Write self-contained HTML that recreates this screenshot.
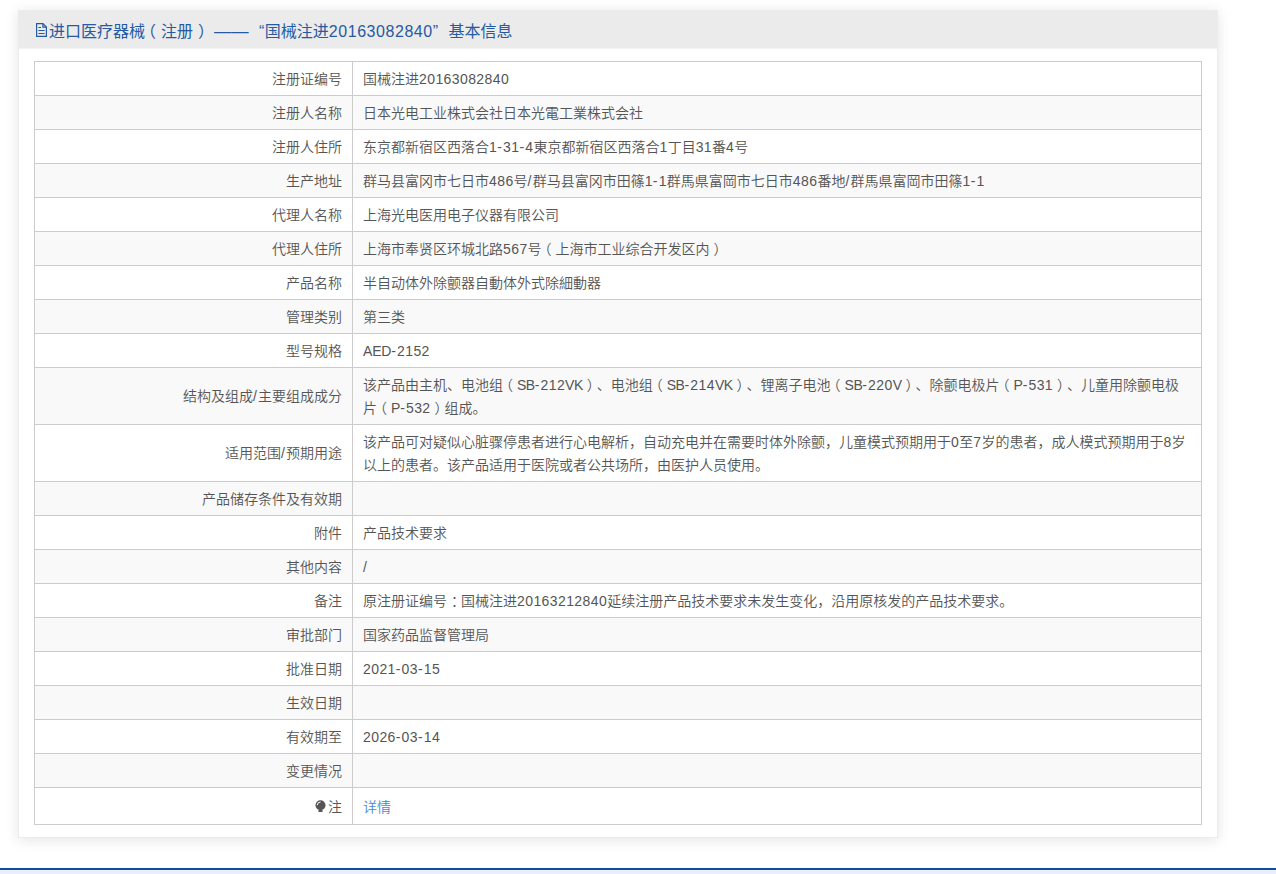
<!DOCTYPE html>
<html lang="zh-CN">
<head>
<meta charset="utf-8">
<title>进口医疗器械（注册）基本信息</title>
<style>
*{box-sizing:border-box;}
html,body{margin:0;padding:0;background:#fff;}
body{
  width:1276px;height:874px;overflow:hidden;position:relative;
  font-family:"Liberation Sans","Noto Sans CJK SC",sans-serif;
  font-size:14px;color:#555;font-weight:350;
  text-spacing-trim:space-all;font-kerning:none;
}
.card{
  position:absolute;left:18px;top:10px;width:1200px;height:828px;
  background:#fff;border:1px solid #ececec;
  box-shadow:0 2px 13px rgba(0,0,0,.11);
}
.hd{
  height:38px;background:linear-gradient(to bottom,#ebebeb 37px,#f3f3f3 37px);
  padding:0 0 0 16px;
  font-size:16px;line-height:38px;color:#265aa2;font-weight:400;
  white-space:nowrap;
}
.ht{position:relative;top:2px;}
.hd svg{display:inline-block;vertical-align:0px;margin:0 2px 0 1px;}
.n{letter-spacing:.41px;}
.h{font-style:normal;letter-spacing:1.15px;}
.u{font-style:normal;letter-spacing:-.2px;}
.u.w{letter-spacing:-.5px;}
.hd .n{letter-spacing:.55px;}
.ds{display:inline-block;transform:scaleX(1.08);transform-origin:0 50%;}
.pl,.pr{position:relative;}
.pl{left:-4px;}.pr{left:4px;}
.hd .pl{left:-5px;}.hd .pr{left:5px;}
.q1{margin-left:9px;margin-right:.5px;}
.q2{margin-right:10.5px;}
table{
  position:absolute;left:15px;top:50px;width:1168px;
  border-collapse:collapse;table-layout:fixed;
  border:1px solid #ccc;
}
td{
  border:1px solid #ccc;
  padding:6px 10px 4px;line-height:23px;height:34px;
  vertical-align:middle;font-size:14px;color:#555;font-weight:350;
  text-spacing-trim:space-all;font-kerning:none;
}
td.l{width:318px;text-align:right;white-space:nowrap;}
td.v{text-align:left;}
tr:nth-child(even) td{background:#f9f9f9;}
tr.last td{height:37px;}
tr.dbl td.l{padding:5px 10px;}
a{color:#4a8ad4;text-decoration:none;}
.bulb{display:inline-block;vertical-align:-1px;margin-right:2px;}
.foot{
  position:absolute;left:0;top:868px;width:1276px;height:6px;
  background:#e9eef8;border-top:2px solid #0b4ea2;
}
</style>
</head>
<body>
<div class="card">
  <div class="hd"><div class="ht"><svg width="11" height="14" viewBox="0 0 11 14"><path d="M.6 .6h6.3l3.5 3.5v9.3h-9.8z" fill="none" stroke="#265aa2" stroke-width="1.2"/><path d="M6.9 .6v3.5h3.5M2.4 4.5h2.6M2.4 7.5h6.2M2.4 10.5h6.2" fill="none" stroke="#265aa2" stroke-width="1.2"/></svg>进口医疗器械<span class="pl">（</span>注册<span class="pr">）</span> <span class="ds">——</span> <span class="q1">“</span>国械注进<span class="n">20163082840</span><span class="q2">”</span>基本信息</div></div>
  <table>
    <tr><td class="l">注册证编号</td><td class="v">国械注进<span class="n">20163082840</span></td></tr>
    <tr><td class="l">注册人名称</td><td class="v">日本光电工业株式会社日本光電工業株式会社</td></tr>
    <tr><td class="l">注册人住所</td><td class="v">东京都新宿区西落合<span class="n">1<i class="h">-</i>31<i class="h">-</i>4</span>東京都新宿区西落合<span class="n">1</span>丁目<span class="n">31</span>番<span class="n">4</span>号</td></tr>
    <tr><td class="l">生产地址</td><td class="v">群马县富冈市七日市<span class="n">486</span>号<span class="n"><i class="h">/</i></span>群马县富冈市田篠<span class="n">1<i class="h">-</i>1</span>群馬県富岡市七日市<span class="n">486</span>番地<span class="n"><i class="h">/</i></span>群馬県富岡市田篠<span class="n">1<i class="h">-</i>1</span></td></tr>
    <tr><td class="l">代理人名称</td><td class="v">上海光电医用电子仪器有限公司</td></tr>
    <tr><td class="l">代理人住所</td><td class="v">上海市奉贤区环城北路<span class="n">567</span>号<span class="pl">（</span>上海市工业综合开发区内<span class="pr">）</span></td></tr>
    <tr><td class="l">产品名称</td><td class="v">半自动体外除颤器自動体外式除細動器</td></tr>
    <tr><td class="l">管理类别</td><td class="v">第三类</td></tr>
    <tr><td class="l">型号规格</td><td class="v"><span class="n"><i class="u">AED</i><i class="h">-</i>2152</span></td></tr>
    <tr class="dbl"><td class="l">结构及组成<i class="h">/</i>主要组成成分</td><td class="v">该产品由主机、电池组<span class="pl">（</span><span class="n"><i class="u w">SB</i><i class="h">-</i>212<i class="u w">VK</i></span><span class="pr">）</span>、电池组<span class="pl">（</span><span class="n"><i class="u w">SB</i><i class="h">-</i>214<i class="u w">VK</i></span><span class="pr">）</span>、锂离子电池<span class="pl">（</span><span class="n"><i class="u w">SB</i><i class="h">-</i>220<i class="u w">V</i></span><span class="pr">）</span>、除颤电极片<span class="pl">（</span><span class="n"><i class="u">P</i><i class="h">-</i>531</span><span class="pr">）</span>、儿童用除颤电极<br>片<span class="pl">（</span><span class="n"><i class="u">P</i><i class="h">-</i>532</span><span class="pr">）</span>组成。</td></tr>
    <tr class="dbl"><td class="l">适用范围<i class="h">/</i>预期用途</td><td class="v">该产品可对疑似心脏骤停患者进行心电解析，自动充电并在需要时体外除颤，儿童模式预期用于<span class="n">0</span>至<span class="n">7</span>岁的患者，成人模式预期用于<span class="n">8</span>岁<br>以上的患者。该产品适用于医院或者公共场所，由医护人员使用。</td></tr>
    <tr><td class="l">产品储存条件及有效期</td><td class="v"></td></tr>
    <tr><td class="l">附件</td><td class="v">产品技术要求</td></tr>
    <tr><td class="l">其他内容</td><td class="v"><span class="n"><i class="h">/</i></span></td></tr>
    <tr><td class="l">备注</td><td class="v">原注册证编号<span class="pr">：</span>国械注进<span class="n">20163212840</span>延续注册产品技术要求未发生变化，沿用原核发的产品技术要求。</td></tr>
    <tr><td class="l">审批部门</td><td class="v">国家药品监督管理局</td></tr>
    <tr><td class="l">批准日期</td><td class="v"><span class="n">2021<i class="h">-</i>03<i class="h">-</i>15</span></td></tr>
    <tr><td class="l">生效日期</td><td class="v"></td></tr>
    <tr><td class="l">有效期至</td><td class="v"><span class="n">2026<i class="h">-</i>03<i class="h">-</i>14</span></td></tr>
    <tr><td class="l">变更情况</td><td class="v"></td></tr>
    <tr class="last"><td class="l"><svg class="bulb" width="11" height="13" viewBox="0 0 11 13"><circle cx="5.5" cy="5.2" r="5" fill="#555"/><rect x="3.5" y="10" width="4" height="2" fill="#555"/><path d="M2.3 5.2a3.2 3.2 0 0 1 3.2-3.2" fill="none" stroke="#fff" stroke-width="1"/></svg>注</td><td class="v"><a>详情</a></td></tr>
  </table>
</div>
<div class="foot"></div>
</body>
</html>
